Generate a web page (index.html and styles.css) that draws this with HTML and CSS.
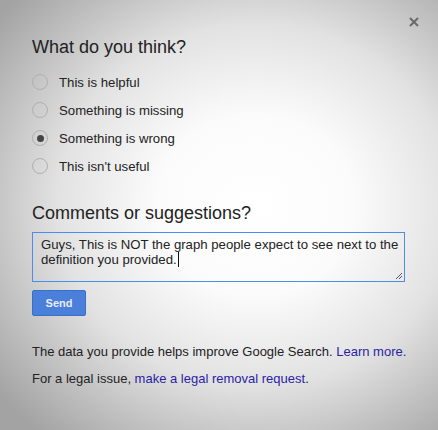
FILE: index.html
```html
<!DOCTYPE html>
<html>
<head>
<meta charset="utf-8">
<link rel="stylesheet" href="styles.css">
</head>
<body>
<div class="dialog">
  <button class="close" aria-label="Close">
    <svg width="10" height="10" viewBox="0 0 10 10"><path d="M1 1 L9 9 M9 1 L1 9" stroke="#6a6a6a" stroke-width="2"/></svg>
  </button>
  <h2 class="title">What do you think?</h2>
  <ul class="options">
    <li class="option"><span class="radio"></span><span>This is helpful</span></li>
    <li class="option"><span class="radio"></span><span>Something is missing</span></li>
    <li class="option"><span class="radio checked"></span><span>Something is wrong</span></li>
    <li class="option"><span class="radio"></span><span>This isn't useful</span></li>
  </ul>
  <h2 class="title comments">Comments or suggestions?</h2>
  <div class="textarea">
    <div class="ta-text">Guys, This is NOT the graph people expect to see next to the definition you provided.<span class="caret"></span></div>
    <svg class="grip" width="8" height="8" viewBox="0 0 8 8"><path d="M7 1 L1 7 M7 4 L4 7" stroke="#555" stroke-width="1"/></svg>
  </div>
  <button class="send">Send</button>
  <p class="note">The data you provide helps improve Google Search. <a href="#">Learn more.</a></p>
  <p class="note">For a legal issue, <a href="#">make a legal removal request</a>.</p>
</div>
</body>
</html>
```
FILE: styles.css
```css
html, body {
  margin: 0;
  height: 100%;
}
body {
  width: 438px;
  height: 430px;
  overflow: hidden;
  background: radial-gradient(ellipse 330px 300px at 255px 205px, #ffffff 0%, #fbfbfb 30%, #e2e2e2 60%, #c2c2c2 80%, #a3a3a3 100%);
  font-family: Arial, "Liberation Sans", sans-serif;
  color: #222;
}
.dialog {
  position: relative;
  padding: 36px 20px 0 32px;
}
.close {
  position: absolute;
  top: 17px;
  right: 19px;
  border: 0;
  background: none;
  padding: 0;
  width: 10px;
  height: 10px;
  display: flex;
}
.title {
  margin: 0;
  font-weight: normal;
  font-size: 18px;
  line-height: 22px;
  color: #222;
}
.options {
  list-style: none;
  margin: 15px 0 0 0;
  padding: 0;
  display: flex;
  flex-direction: column;
  gap: 10px;
}
.option {
  display: flex;
  align-items: center;
  height: 18px;
  font-size: 13.2px;
  color: #222;
}
.radio {
  width: 14px;
  height: 14px;
  border: 1px solid #b0b0b0;
  border-radius: 50%;
  margin-right: 11px;
  display: flex;
  align-items: center;
  justify-content: center;
  box-sizing: content-box;
}
.radio.checked::after {
  content: "";
  width: 7px;
  height: 7px;
  border-radius: 50%;
  background: #444;
}
.comments {
  margin-top: 27px;
}
.textarea {
  position: relative;
  margin-top: 8px;
  width: 371px;
  height: 48px;
  border: 1px solid #4d8cec;
  box-sizing: content-box;
}
.ta-text {
  padding: 4px 2px 0 8px;
  font-size: 13.2px;
  line-height: 15px;
  color: #222;
}
.caret {
  display: inline-block;
  width: 1px;
  height: 15px;
  background: #111;
  vertical-align: top;
  margin-left: 1px;
}
.grip {
  position: absolute;
  right: 1px;
  bottom: 1px;
}
.send {
  display: block;
  margin-top: 8px;
  width: 54px;
  height: 26px;
  border: 1px solid #3a6fc8;
  border-radius: 2px;
  background: #4a7fda;
  color: #e8eef8;
  font-family: Arial, "Liberation Sans", sans-serif;
  font-weight: bold;
  font-size: 11px;
  padding: 0;
}
.note {
  margin: 27px 0 0 0;
  font-size: 13px;
  line-height: 18px;
  color: #222;
  white-space: nowrap;
}
.note + .note {
  margin-top: 9px;
}
.note a {
  color: #2a1ea6;
  text-decoration: none;
}
```
